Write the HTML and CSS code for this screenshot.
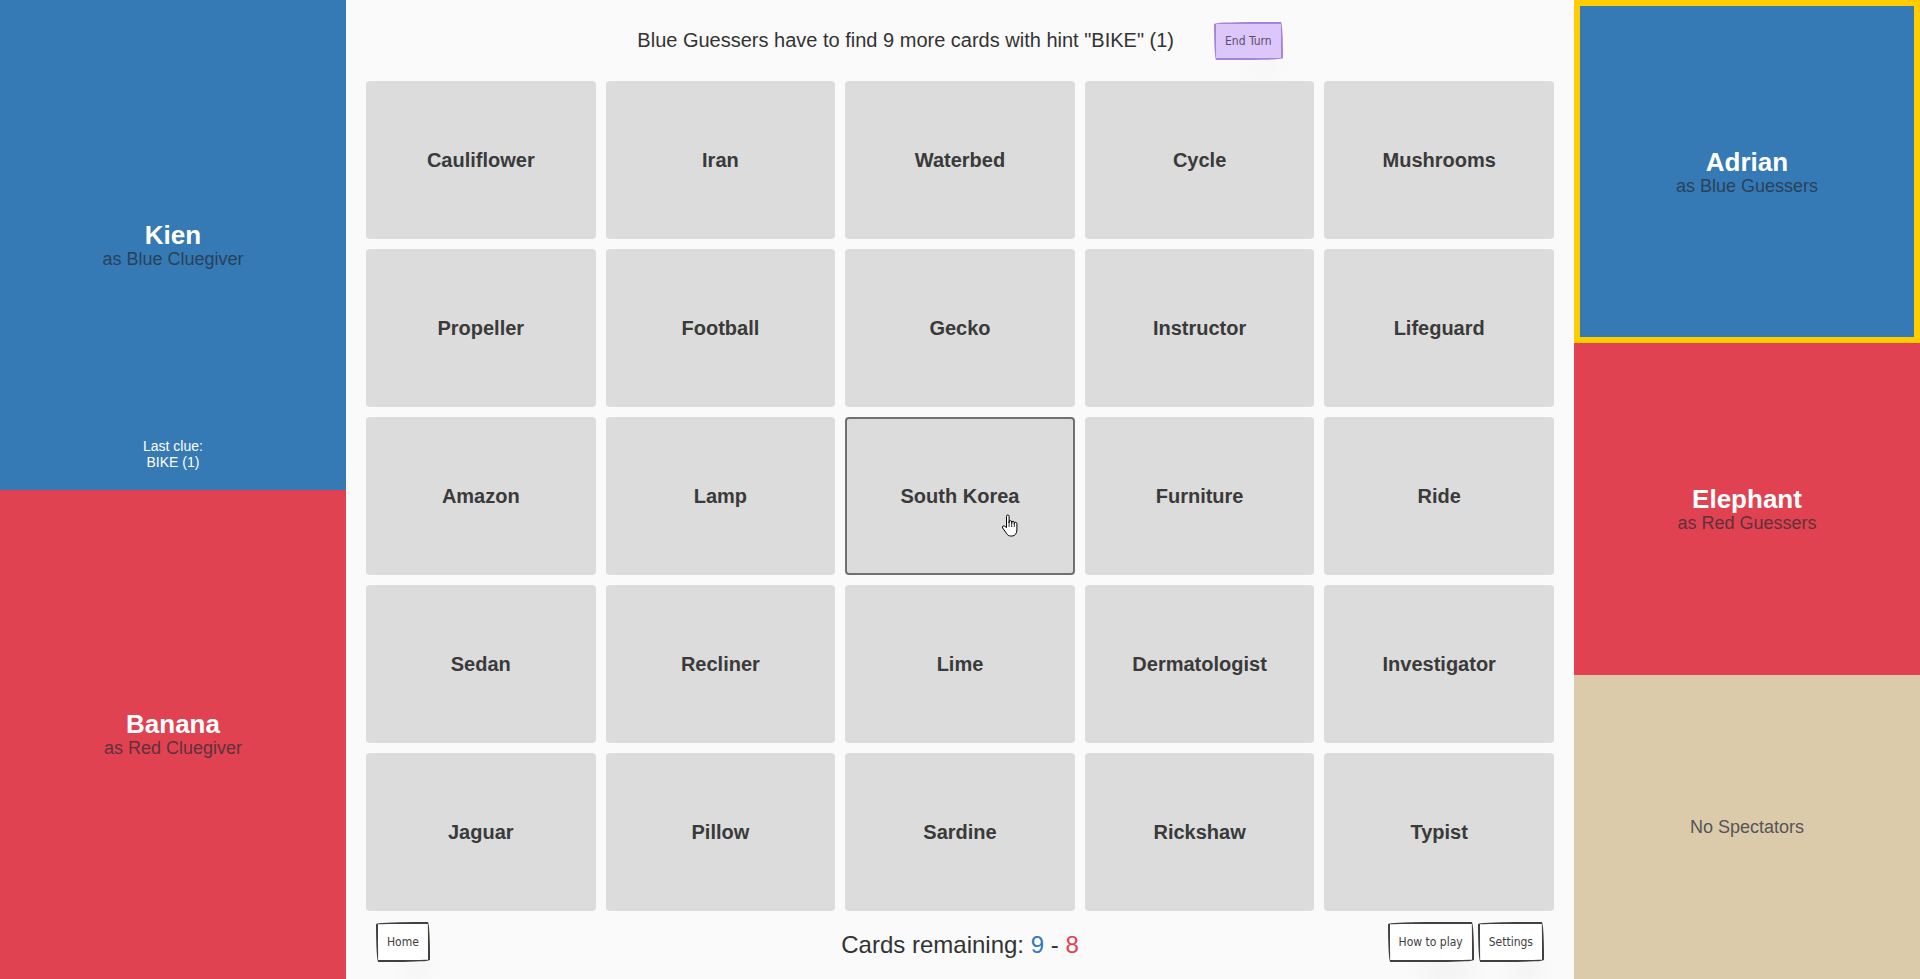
FILE: index.html
```html
<!DOCTYPE html>
<html lang="en">
<head>
<meta charset="utf-8">
<title>Codenames</title>
<link rel="stylesheet" href="styles.css">
</head>
<body>
<div class="app">
  <aside class="side">
    <section class="team blue clue">
      <div class="spacer"></div>
      <div class="player">
        <div class="name">Kien</div>
        <div class="role">as Blue Cluegiver</div>
      </div>
      <div class="last-clue">Last clue:<br>BIKE (1)</div>
    </section>
    <section class="team red">
      <div class="player">
        <div class="name">Banana</div>
        <div class="role">as Red Cluegiver</div>
      </div>
    </section>
  </aside>

  <main class="board">
    <header class="status">
      <span class="status-text">Blue Guessers have to find 9 more cards with hint "BIKE" (1)</span>
      <button class="pbtn end-turn">End Turn</button>
    </header>
    <div class="grid">
      <div class="card">Cauliflower</div>
      <div class="card">Iran</div>
      <div class="card">Waterbed</div>
      <div class="card">Cycle</div>
      <div class="card">Mushrooms</div>
      <div class="card">Propeller</div>
      <div class="card">Football</div>
      <div class="card">Gecko</div>
      <div class="card">Instructor</div>
      <div class="card">Lifeguard</div>
      <div class="card">Amazon</div>
      <div class="card">Lamp</div>
      <div class="card hover">South Korea
        <svg class="cursor" viewBox="0 0 18 24" width="18" height="24" aria-hidden="true">
          <path d="M5.5 13.5V2.3a1.3 1.3 0 0 1 2.6 0V9V7.9a1.3 1.3 0 0 1 2.6 0V9.6V8.7a1.3 1.3 0 0 1 2.6 0V10.2V9.6a1.3 1.3 0 0 1 2.6 0V16c0 3.2-1.9 6-4.6 6H9.6c-2 0-3.1-1-4.1-2.6L1.7 14a1.3 1.3 0 0 1 2.1-1.6Z" fill="#fff" stroke="#000" stroke-width="1" stroke-linejoin="round"/>
          <path d="M8.1 9v4M10.7 9.6v3.4M13.3 10.2v2.8" stroke="#000" stroke-width="0.8" fill="none"/>
        </svg>
      </div>
      <div class="card">Furniture</div>
      <div class="card">Ride</div>
      <div class="card">Sedan</div>
      <div class="card">Recliner</div>
      <div class="card">Lime</div>
      <div class="card">Dermatologist</div>
      <div class="card">Investigator</div>
      <div class="card">Jaguar</div>
      <div class="card">Pillow</div>
      <div class="card">Sardine</div>
      <div class="card">Rickshaw</div>
      <div class="card">Typist</div>
    </div>
    <footer class="footer">
      <div class="left"><button class="pbtn">Home</button></div>
      <div class="remaining">Cards remaining: <span class="c-blue">9</span> - <span class="c-red">8</span></div>
      <div class="right"><button class="pbtn">How to play</button><button class="pbtn">Settings</button></div>
    </footer>
  </main>

  <aside class="side">
    <section class="team blue current">
      <div class="player">
        <div class="name">Adrian</div>
        <div class="role">as Blue Guessers</div>
      </div>
    </section>
    <section class="team red guessers">
      <div class="player">
        <div class="name">Elephant</div>
        <div class="role">as Red Guessers</div>
      </div>
    </section>
    <section class="team spectators">
      <div class="none">No Spectators</div>
    </section>
  </aside>
</div>
</body>
</html>
```

FILE: styles.css
```css
* { box-sizing: border-box; }

html, body {
  margin: 0;
  padding: 0;
  height: 979px;
  overflow: hidden;
}

body {
  font-family: "Liberation Sans", Arial, sans-serif;
  background: #fafafa;
  color: #333;
}

.app {
  display: grid;
  grid-template-columns: 346px 1fr 346px;
  height: 979px;
}

.side {
  display: flex;
  flex-direction: column;
  height: 979px;
}

.team {
  display: flex;
  align-items: center;
  justify-content: center;
  text-align: center;
}

.blue { background: #3579b5; }
.red { background: #e04251; }

.side .team { flex: 1 1 0; }

.team.clue {
  display: grid;
  grid-template-rows: 1fr auto 1fr;
  justify-items: center;
}

.team.clue .last-clue {
  align-self: end;
  margin-bottom: 20px;
}

.player { line-height: 1; }

.name {
  color: #fff;
  font-weight: bold;
  font-size: 26px;
  line-height: 28px;
}

.role {
  color: rgba(35, 40, 48, 0.7);
  font-size: 18px;
  line-height: 20px;
}

.last-clue {
  color: #fff;
  font-size: 14px;
  line-height: 16px;
}

.team.current {
  flex: 0 0 343px;
  border: 6px solid #ffcc00;
}

.team.guessers { flex: 0 0 332px; }

.team.spectators {
  flex: 1 1 0;
  background: #dccbaa;
}

.none {
  color: #555;
  font-size: 18px;
}

/* board */
.board {
  display: flex;
  flex-direction: column;
  padding: 0 20px;
}

.status {
  height: 81px;
  display: flex;
  align-items: center;
  justify-content: center;
  gap: 40px;
}

.status-text {
  font-size: 20px;
  color: #333;
}

.pbtn {
  font-family: "Liberation Sans Narrow", "DejaVu Sans Condensed", sans-serif;
  font-size: 12px;
  font-weight: normal;
  color: #41403e;
  background: #fff;
  border: 2px solid #41403e;
  border-radius: 255px 15px 225px 15px / 15px 225px 15px 255px;
  box-shadow: 15px 28px 25px -18px rgba(0, 0, 0, 0.2);
  height: 40px;
  padding: 0 9px;
  cursor: pointer;
}

.end-turn {
  height: 38px;
  padding: 0 9px;
  background: #dcc6fa;
  border-color: #a585d8;
  color: #5b4e6e;
}

.grid {
  display: grid;
  grid-template-columns: repeat(5, 1fr);
  grid-template-rows: repeat(5, 158px);
  gap: 10px;
}

.card {
  position: relative;
  background: #dcdcdc;
  border: 2px solid transparent;
  border-radius: 4px;
  display: flex;
  align-items: center;
  justify-content: center;
  font-weight: bold;
  font-size: 20px;
  color: #3a3a3a;
}

.card.hover { border-color: #707070; }

.cursor {
  position: absolute;
  left: 154px;
  top: 95px;
}

.footer {
  display: grid;
  grid-template-columns: 1fr auto 1fr;
  align-items: center;
  padding: 11px 10px 0;
}

.footer .right {
  display: flex;
  justify-content: flex-end;
  gap: 4px;
}

.remaining {
  font-size: 24px;
  color: #333;
  padding-top: 5px;
}

.c-blue { color: #3579b5; }
.c-red { color: #e04251; }
```
